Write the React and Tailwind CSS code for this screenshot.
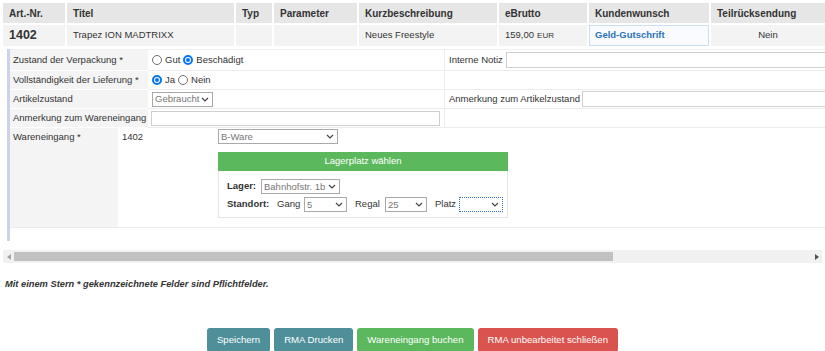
import React from "react";

const FONT = "font-['Liberation_Sans',Arial,sans-serif]";

function Chevron() {
  return (
    <svg width="8" height="5" viewBox="0 0 8 5" className="shrink-0">
      <path d="M1 1l3 3 3-3" fill="none" stroke="#444" strokeWidth="1.2" />
    </svg>
  );
}

function Select({ value, className = "", dotted = false }) {
  return (
    <div
      className={`flex items-center justify-between h-[15px] border bg-white pl-[2px] pr-[3px] text-[#777] ${
        dotted ? "border-dotted border-[#2f6fd6]" : "border-[#a9a9a9]"
      } ${className}`}
    >
      <span className="leading-none whitespace-nowrap">{value}</span>
      <Chevron />
    </div>
  );
}

function Radio({ checked }) {
  return checked ? (
    <span className="flex items-center justify-center w-[10px] h-[10px] rounded-full border-[2px] border-[#0a75f0] bg-white">
      <span className="w-[4px] h-[4px] rounded-full bg-[#0a75f0]" />
    </span>
  ) : (
    <span className="block w-[10px] h-[10px] rounded-full border border-[#6f6f6f] bg-white" />
  );
}

function Btn({ children, color }) {
  return (
    <div className={`h-[24px] px-[10px] flex items-center rounded-[3px] text-white text-[9.6px] ${color}`}>{children}</div>
  );
}

export default function App() {
  const head = "bg-[#e6e6e6] h-[20px] px-[6px] flex items-center font-bold text-[10px]";
  const cell = "bg-[#f3f3f3] h-[21px] px-[6px] flex items-center";
  const label = "bg-[#f4f4f4] border-b border-white px-[3px] flex items-center whitespace-nowrap";
  const val = "border-b border-[#ececec] px-[3px] flex items-center";
  const right = "border-b border-l border-[#ececec] px-[4px] flex items-center overflow-hidden";
  return (
    <div className={`w-[825px] h-[351px] overflow-hidden bg-white text-[#333] text-[9.5px] ${FONT}`}>
      {/* top table */}
      <div className="pt-[3px] pl-[3px] grid grid-cols-[62px_167px_36px_83px_138px_88px_120px_1fr] gap-[2px]">
        <div className={head}>Art.-Nr.</div>
        <div className={head}>Titel</div>
        <div className={head}>Typ</div>
        <div className={head}>Parameter</div>
        <div className={head}>Kurzbeschreibung</div>
        <div className={head}>eBrutto</div>
        <div className={head}>Kundenwunsch</div>
        <div className={head}>Teilrücksendung</div>

        <div className={`${cell} font-bold text-[12.5px]`}>1402</div>
        <div className={cell}>Trapez ION MADTRIXX</div>
        <div className={cell}></div>
        <div className={cell}></div>
        <div className={cell}>Neues Freestyle</div>
        <div className={cell}>
          159,00<span className="ml-[3px] text-[8px]">EUR</span>
        </div>
        <div className="h-[21px] px-[5px] flex items-center bg-[#f9fbfe] border border-[#c9def2] font-bold text-[#2c72b8] text-[9.5px]">
          Geld-Gutschrift
        </div>
        <div className={`${cell} justify-center`}>Nein</div>
      </div>

      {/* sub form */}
      <div className="mt-[3px] ml-[7px] border-l-[3px] border-[#cdd1ea] pb-[13px]">
        <div className="border-t border-[#f0f0f0] grid grid-cols-[138px_296px_1fr]">
          <div className={`${label} h-[21px]`}>Zustand der Verpackung *</div>
          <div className={`${val} h-[21px] gap-[3px] pl-[4px]`}>
            <Radio />
            <span>Gut</span>
            <Radio checked />
            <span>Beschädigt</span>
          </div>
          <div className={`${right} h-[21px]`}>
            <span className="shrink-0">Interne Notiz</span>
            <div className="ml-[3px] h-[16px] w-[400px] shrink-0 border border-[#cfcfcf] bg-white" />
          </div>

          <div className={`${label} h-[19px]`}>Vollständigkeit der Lieferung *</div>
          <div className={`${val} h-[19px] gap-[3px] pl-[4px]`}>
            <Radio checked />
            <span>Ja</span>
            <Radio />
            <span>Nein</span>
          </div>
          <div className={`${right} h-[19px]`}></div>

          <div className={`${label} h-[19px]`}>Artikelzustand</div>
          <div className={`${val} h-[19px] pl-[4px]`}>
            <Select value="Gebraucht" className="w-[61px]" />
          </div>
          <div className={`${right} h-[19px]`}>
            <span className="shrink-0">Anmerkung zum Artikelzustand</span>
            <div className="ml-[2px] h-[16px] w-[400px] shrink-0 border border-[#cfcfcf] bg-white" />
          </div>

          <div className={`${label} h-[19px]`}>Anmerkung zum Wareneingang</div>
          <div className={`${val} h-[19px]`}>
            <div className="h-[15px] w-[289px] border border-[#cfcfcf] bg-white" />
          </div>
          <div className={`${right} h-[19px]`}></div>
        </div>

        <div className="flex border-b border-[#ececec]">
          <div className="w-[108px] h-[99px] bg-[#f4f4f4] px-[3px] pt-[2px]">Wareneingang *</div>
          <div className="w-[100px] pl-[4px] pt-[2px]">1402</div>
          <div className="pt-[1px]">
            <Select value="B-Ware" className="w-[120px]" />
            <div className="mt-[8px] w-[290px]">
              <div className="h-[19px] bg-[#5cb85c] text-white flex items-center justify-center">Lagerplatz wählen</div>
              <div className="border border-t-0 border-[#e4e4e4] pl-[8px] pt-[8px] pb-[5px]">
                <div className="flex items-center">
                  <span className="w-[34px] font-bold">Lager:</span>
                  <Select value="Bahnhofstr. 1b" className="w-[79px]" />
                </div>
                <div className="flex items-center mt-[3px]">
                  <span className="w-[50px] font-bold">Standort:</span>
                  <span className="w-[27px]">Gang</span>
                  <Select value="5" className="w-[43px]" />
                  <span className="ml-[8px] w-[30px]">Regal</span>
                  <Select value="25" className="w-[42px]" />
                  <span className="ml-[8px] w-[24px]">Platz</span>
                  <Select value="" className="w-[44px]" dotted />
                </div>
              </div>
            </div>
          </div>
        </div>
      </div>

      {/* scrollbar */}
      <div className="mt-[9px] mx-[3px] h-[13px] bg-[#f1f1f1] flex items-center">
        <div className="w-[11px] flex justify-center">
          <svg width="4" height="6" viewBox="0 0 4 6"><path d="M4 0L0 3l4 3z" fill="#a3a3a3" /></svg>
        </div>
        <div className="h-[9px] w-[599px] bg-[#c1c1c1]" />
        <div className="flex-1" />
        <div className="w-[11px] flex justify-center">
          <svg width="4" height="6" viewBox="0 0 4 6"><path d="M0 0l4 3-4 3z" fill="#505050" /></svg>
        </div>
      </div>

      <div className="mt-[15px] pl-[5px] font-bold italic text-[9.3px]">
        Mit einem Stern * gekennzeichnete Felder sind Pflichtfelder.
      </div>

      <div className="mt-[36px] flex justify-center gap-[4px]">
        <Btn color="bg-[#4f8f9a]">Speichern</Btn>
        <Btn color="bg-[#4f8f9a]">RMA Drucken</Btn>
        <Btn color="bg-[#5cb85c]">Wareneingang buchen</Btn>
        <Btn color="bg-[#d9534f]">RMA unbearbeitet schließen</Btn>
      </div>
    </div>
  );
}
